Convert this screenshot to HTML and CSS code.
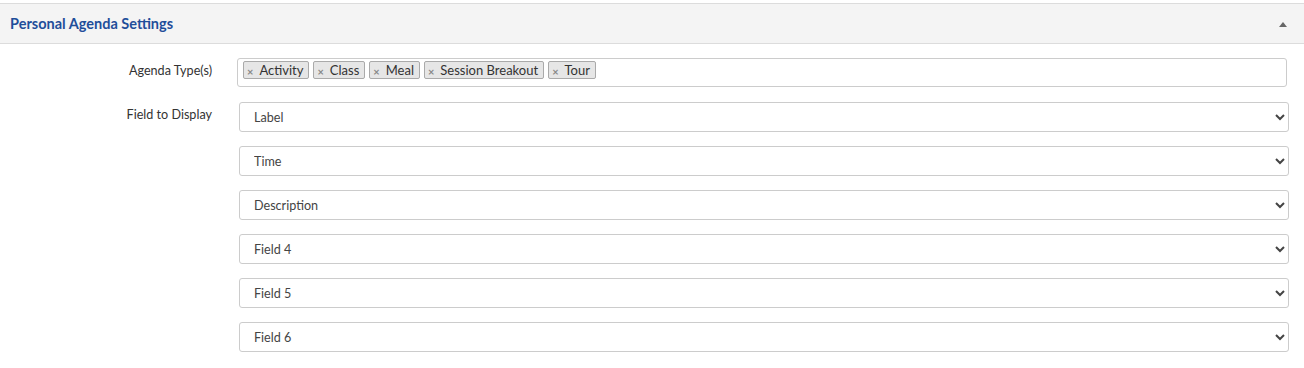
FILE: index.html
```html
<!DOCTYPE html>
<html lang="en">
<head>
  <meta charset="UTF-8">
  <title>Personal Agenda Settings</title>
  <link rel="stylesheet" href="styles.css">
</head>
<body>

  <!-- panel -->
  <div class="panel">
    <div class="panel-heading">
      <span class="panel-title">Personal Agenda Settings</span>
      <span class="collapse-icon"></span>
    </div>

    <div class="panel-body">
      <div class="form-row">
        <label class="row-label">Agenda Type(s)</label>
        <div class="multi">
          <span class="tag"><span class="tag-x">×</span>Activity</span>
          <span class="tag"><span class="tag-x">×</span>Class</span>
          <span class="tag"><span class="tag-x">×</span>Meal</span>
          <span class="tag"><span class="tag-x">×</span>Session Breakout</span>
          <span class="tag"><span class="tag-x">×</span>Tour</span>
        </div>
      </div>

      <div class="form-row">
        <label class="row-label">Field to Display</label>
        <div class="select-list">
          <select><option>Label</option></select>
          <select><option>Time</option></select>
          <select><option>Description</option></select>
          <select><option>Field 4</option></select>
          <select><option>Field 5</option></select>
          <select><option>Field 6</option></select>
        </div>
      </div>
    </div>
  </div>

</body>
</html>
```

FILE: styles.css
```css
* {
  margin: 0;
  padding: 0;
  box-sizing: border-box;
}

body {
  font-family: 'Lato', 'Liberation Sans', sans-serif;
  color: #333;
  background: white;
  padding-top: 3px;
}

.panel-heading {
  background: #f4f4f4;
  border-top: 1px solid #dcdcdc;
  border-bottom: 1px solid #dcdcdc;
  height: 41px;
  display: flex;
  align-items: center;
  justify-content: space-between;
  padding: 0 17px 0 10px;
}

.panel-title {
  color: #1f4e9a;
  font-size: 14.5px;
  font-weight: bold;
}

.collapse-icon {
  width: 0;
  height: 0;
  border-left: 4px solid transparent;
  border-right: 4px solid transparent;
  border-bottom: 5px solid #666;
  margin-top: 1px;
}

.panel-body {
  padding: 14px 17px 0 0;
}

.form-row {
  display: grid;
  grid-template-columns: 212px 1fr;
  column-gap: 25px;
  margin-bottom: 15px;
}

.row-label {
  text-align: right;
  font-size: 12.6px;
  color: #333;
  padding-top: 5px;
}

.multi {
  border: 1px solid #ccc;
  border-radius: 3px;
  height: 29px;
  padding: 2px 5px;
  display: flex;
  align-items: flex-start;
  gap: 4px;
}

.tag {
  display: flex;
  align-items: center;
  height: 18px;
  padding: 0 5px 0 3px;
  background: #e6e6e6;
  border: 1px solid #aaa;
  border-radius: 2px;
  font-size: 13px;
  color: #333;
}

.tag-x {
  color: #888;
  font-size: 11px;
  font-weight: bold;
  margin-right: 6px;
  margin-top: 3px;
}

.select-list {
  display: flex;
  flex-direction: column;
  gap: 14px;
  margin-left: 2px;
  margin-right: -2px;
}

select {
  height: 30px;
  width: 100%;
  border: 1px solid #ccc;
  border-radius: 3px;
  background: white;
  padding: 0 4px 0 10px;
  font-family: 'Lato', 'Liberation Sans', sans-serif;
  font-size: 12.6px;
  color: #444;
}
```
